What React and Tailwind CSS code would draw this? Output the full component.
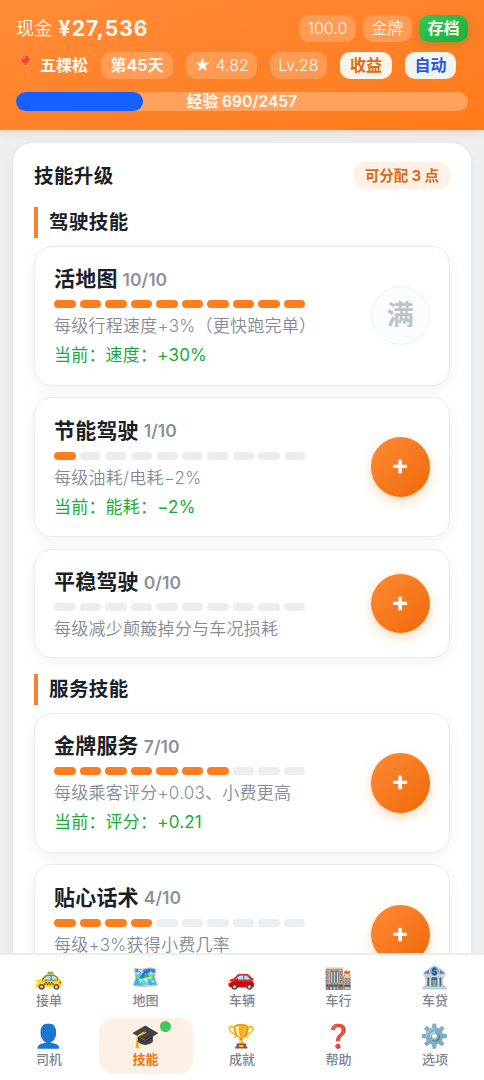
import clsx from "clsx";

const DRIVING_SKILLS = [
  { name: "活地图", level: 10, desc: "每级行程速度+3%（更快跑完单）", effect: "当前：速度：+30%" },
  { name: "节能驾驶", level: 1, desc: "每级油耗/电耗−2%", effect: "当前：能耗：−2%" },
  { name: "平稳驾驶", level: 0, desc: "每级减少颠簸掉分与车况损耗" },
];

const SERVICE_SKILLS = [
  { name: "金牌服务", level: 7, desc: "每级乘客评分+0.03、小费更高", effect: "当前：评分：+0.21" },
  { name: "贴心话术", level: 4, desc: "每级+3%获得小费几率", effect: "" },
];

const NAV_ITEMS = [
  { label: "接单", icon: "🚕" },
  { label: "地图", icon: "🗺️" },
  { label: "车辆", icon: "🚗" },
  { label: "车行", icon: "🏬" },
  { label: "车贷", icon: "🏦" },
  { label: "司机", icon: "👤" },
  { label: "技能", icon: "🎓", active: true },
  { label: "成就", icon: "🏆" },
  { label: "帮助", icon: "❓" },
  { label: "选项", icon: "⚙️" },
];

const Pill = ({ className, children }) => (
  <span
    className={clsx(
      "flex h-[27px] shrink-0 items-center justify-center whitespace-nowrap rounded-[10px] text-base leading-[27px]",
      className,
    )}
  >
    {children}
  </span>
);

const Header = () => (
  <header className="relative z-10 h-[130px] shrink-0 bg-linear-to-br from-[#ff8c37] to-[#ff7918] px-4 pt-[15px] text-[#fff8ef] shadow-[0_2px_10px_rgba(255,122,24,0.25)]">
    <div className="flex h-[27px] items-center">
      <span className="text-lg leading-[27px] font-[350] tracking-[0.3px]">现金</span>
      <b className="ml-1.5 text-[21px] leading-[27px] font-bold tracking-[1.1px]">¥27,536</b>
      <div className="ml-auto flex gap-[7px]">
        <Pill className="w-[57px] bg-white/20 font-light">100.0</Pill>
        <Pill className="w-[49px] bg-white/20 font-[350]">金牌</Pill>
        <Pill className="w-[49px] bg-linear-to-br from-[#34c759] to-[#17b03a] font-bold shadow-[0_3px_10px_rgba(70,130,20,0.35)]">
          存档
        </Pill>
      </div>
    </div>
    <div className="mt-2.5 flex h-[27px] items-center gap-[13px]">
      <span className="flex w-[72px] shrink-0 items-center whitespace-nowrap text-base leading-[27px] font-bold">
        <span className="w-6 shrink-0 pr-1 pb-1 text-center font-['Noto_Color_Emoji'] text-[15px] leading-5">📍</span>
        五棵松
      </span>
      <Pill className="w-[72px] bg-white/20 font-bold">第45天</Pill>
      <Pill className="w-[71px] bg-white/20 font-light">★ 4.82</Pill>
      <Pill className="w-[57px] bg-white/20 font-light">Lv.28</Pill>
      <Pill className="w-[52px] bg-[#fdf3ea] font-bold text-[#db6a0e]">收益</Pill>
      <Pill className="w-[51px] bg-[#f1f5ee] font-bold text-[#2457e6]">自动</Pill>
    </div>
    <div className="mt-[13px] grid h-[19px] grid-rows-[19px] rounded-full bg-[#ffa25e]">
      <div className="col-start-1 row-start-1 w-[127px] rounded-full bg-[#1660ff]" />
      <span className="col-start-1 row-start-1 text-center text-[15.7px] leading-[19px] font-semibold">
        经验 690/2457
      </span>
    </div>
  </header>
);

const SkillCard = ({ name, level, desc, effect }) => (
  <article
    className={clsx(
      "flex items-center justify-between rounded-[18px] border border-[#ececee] bg-white px-[19px] shadow-[0_4px_14px_rgba(0,0,0,0.06)]",
      effect === undefined ? "h-[109.5px]" : "h-[140px]",
    )}
  >
    <div className="self-start pt-[17.5px] whitespace-nowrap">
      <h3 className="flex h-[30px] items-center text-[21px] leading-[30px] font-bold tracking-[0.2px] text-[#1b1f27]">
        {name}
        <span className="ml-[5px] pt-px text-[17.5px] font-semibold tracking-normal text-[#8b919c]">{level}/10</span>
      </h3>
      <div className="mt-1.5 flex gap-1">
        {Array.from({ length: 10 }, (_, i) => (
          <i
            key={i}
            className={clsx("h-2 w-[21.5px] rounded-full", i < level ? "bg-[#ff7d1c]" : "bg-[#ecedf1]")}
          />
        ))}
      </div>
      <p className="mt-1 h-[29px] text-[17px] leading-[28px] font-[350] tracking-[0.25px] text-[#858b96]">{desc}</p>
      {effect === undefined ? null : (
        <p className="h-[29px] text-[17px] leading-[28px] tracking-[0.2px] text-[#16ad35]">{effect}</p>
      )}
    </div>
    {level === 10 ? (
      <button
        type="button"
        className="size-[59.5px] shrink-0 rounded-full border border-[#f0f2f5] bg-[#fafcff] text-[27px] leading-none font-bold text-[#bfc3c9]"
      >
        满
      </button>
    ) : (
      <button
        type="button"
        className="flex size-[59.5px] shrink-0 items-center justify-center rounded-full bg-linear-to-br from-[#ff8a32] to-[#ef6800] pb-[3px] text-[27px] font-bold text-white shadow-[0_4px_12px_rgba(255,122,24,0.3)]"
      >
        +
      </button>
    )}
  </article>
);

const SkillSection = ({ title, skills }) => (
  <section className="mb-4">
    <h2 className="mb-[7.7px] h-[31px] border-l-4 border-[#f58230] pl-[11px] text-[19.5px] leading-[31px] font-bold tracking-[0.4px] text-[#1b1f27]">
      {title}
    </h2>
    <div className="flex flex-col gap-[11.5px]">
      {skills.map((skill) => (
        <SkillCard key={skill.name} {...skill} />
      ))}
    </div>
  </section>
);

const BottomNav = () => (
  <nav className="z-10 grid h-[127px] shrink-0 grid-cols-5 grid-rows-[56px_56px] gap-x-[2.5px] gap-y-[3px] border-t-2 border-[#ebecef] bg-white px-0.5 pt-1">
    {NAV_ITEMS.map(({ label, icon, active }) => (
      <button
        key={label}
        type="button"
        className={clsx(
          "relative flex flex-col items-center rounded-[14px] pt-1",
          active ? "bg-[#fff0e5] font-bold text-[#f27414]" : "font-medium text-[#7d8490]",
        )}
      >
        <span className="h-7 font-['Noto_Color_Emoji'] text-[23px] leading-[29px] font-normal">{icon}</span>
        <span className="text-[13px] leading-[19px]">{label}</span>
        {active ? <i className="absolute top-[3px] right-[22px] size-[11px] rounded-full bg-[#3fc95c]" /> : null}
      </button>
    ))}
  </nav>
);

const App = () => (
  <div className="flex h-[1080px] w-[484px] flex-col overflow-hidden bg-[#edeff1] font-['Inter','Noto_Sans_CJK_SC','Noto_Color_Emoji',sans-serif]">
    <Header />
    <main className="min-h-0 flex-1 overflow-hidden px-[13px] pt-[13px]">
      <div className="rounded-[20px] bg-white px-[21px] pt-[18px] shadow-[0_2px_10px_rgba(0,0,0,0.06)]">
        <div className="mb-[17px] flex h-[29px] items-center justify-between">
          <h1 className="pt-0.5 text-[19.5px] font-bold tracking-[0.4px] text-[#1b1f27]">技能升级</h1>
          <span className="flex h-[27px] w-24 items-center justify-center rounded-[11px] bg-[#fff1e6] text-[14.5px] font-bold text-[#d96a18]">
            可分配 3 点
          </span>
        </div>
        <SkillSection title="驾驶技能" skills={DRIVING_SKILLS} />
        <SkillSection title="服务技能" skills={SERVICE_SKILLS} />
      </div>
    </main>
    <BottomNav />
  </div>
);

export default App;
